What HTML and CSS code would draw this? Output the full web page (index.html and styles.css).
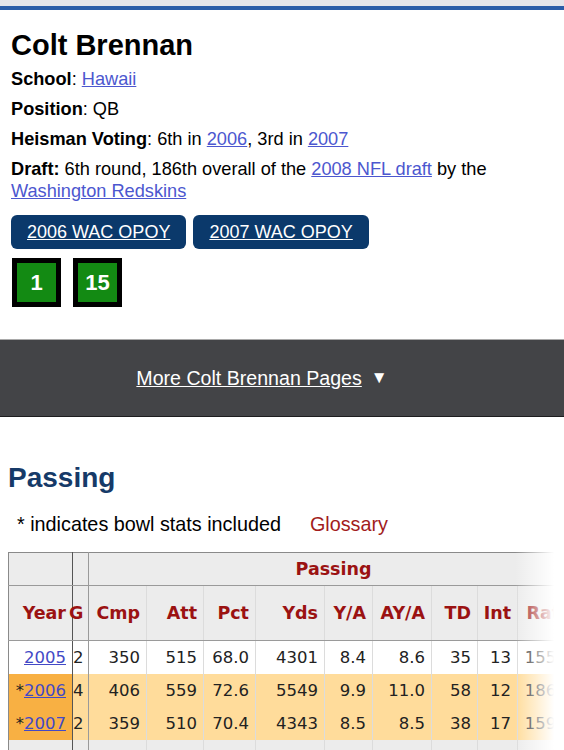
FILE: index.html
```html
<!DOCTYPE html>
<html lang="en">
<head>
<meta charset="utf-8">
<title>Colt Brennan College Stats</title>
<link rel="stylesheet" href="styles.css">
</head>
<body>
<div class="topband"></div>
<div class="bio">
  <h1>Colt Brennan</h1>
  <p><strong>School</strong>: <a href="#">Hawaii</a></p>
  <p><strong>Position</strong>: QB</p>
  <p><strong>Heisman Voting</strong>: 6th in <a href="#">2006</a>, 3rd in <a href="#">2007</a></p>
  <p><strong>Draft:</strong> 6th round, 186th overall of the <a href="#">2008 NFL draft</a> by the <a href="#">Washington Redskins</a></p>
  <ul class="awards">
    <li><a href="#">2006 WAC OPOY</a></li>
    <li><a href="#">2007 WAC OPOY</a></li>
  </ul>
  <div class="badges">
    <span class="badge">1</span>
    <span class="badge">15</span>
  </div>
</div>
<div class="morebar"><a href="#">More Colt Brennan Pages</a><span class="arrow">▼</span></div>
<section class="stats">
  <h2>Passing</h2>
  <div class="note"><span>* indicates bowl stats included</span><a class="gloss" href="#">Glossary</a></div>
  <div class="tablewrap">
    <table>
      <colgroup>
        <col class="c-year"><col class="c-g"><col class="c-cmp"><col class="c-att"><col class="c-pct"><col class="c-yds"><col class="c-ya"><col class="c-aya"><col class="c-td"><col class="c-int"><col class="c-rate">
      </colgroup>
      <thead>
        <tr class="over">
          <th class="year"></th>
          <th class="g"></th>
          <th class="span" colspan="9">Passing</th>
        </tr>
        <tr class="head">
          <th class="year">Year</th>
          <th class="g">G</th>
          <th>Cmp</th>
          <th>Att</th>
          <th>Pct</th>
          <th>Yds</th>
          <th>Y/A</th>
          <th>AY/A</th>
          <th>TD</th>
          <th>Int</th>
          <th>Rate</th>
        </tr>
      </thead>
      <tbody>
        <tr>
          <td class="year"><a href="#">2005</a></td>
          <td class="g">2</td>
          <td>350</td><td>515</td><td>68.0</td><td>4301</td><td>8.4</td><td>8.6</td><td>35</td><td>13</td><td>155.1</td>
        </tr>
        <tr class="bowl">
          <td class="year">*<a href="#">2006</a></td>
          <td class="g">4</td>
          <td>406</td><td>559</td><td>72.6</td><td>5549</td><td>9.9</td><td>11.0</td><td>58</td><td>12</td><td>186.0</td>
        </tr>
        <tr class="bowl">
          <td class="year">*<a href="#">2007</a></td>
          <td class="g">2</td>
          <td>359</td><td>510</td><td>70.4</td><td>4343</td><td>8.5</td><td>8.5</td><td>38</td><td>17</td><td>159.9</td>
        </tr>
        <tr class="career">
          <td class="year"></td>
          <td class="g"></td>
          <td></td><td></td><td></td><td></td><td></td><td></td><td></td><td></td><td></td>
        </tr>
      </tbody>
    </table>
  </div>
</section>
</body>
</html>
```
FILE: styles.css
```css
html, body {
  margin: 0;
  padding: 0;
  background: #ffffff;
}

body {
  font-family: "Liberation Sans", Arial, sans-serif;
  color: #000;
}

a {
  color: #4c57cf;
  text-decoration: underline;
}

.topband {
  height: 6px;
  background: #e4e4ea;
  border-bottom: 4px solid #2a5ca8;
}

.bio {
  padding: 0 11px;
}

.bio h1 {
  margin: 18px 0 6px;
  font-size: 29px;
  line-height: 34px;
  font-weight: bold;
}

.bio p {
  margin: 0 0 8px;
  font-size: 18.2px;
  line-height: 22px;
}

.awards {
  list-style: none;
  margin: 13px 0 0;
  padding: 0;
  display: flex;
  gap: 7px;
}

.awards a {
  display: block;
  background: #0b396b;
  color: #ffffff;
  border-radius: 6px;
  padding: 7px 16px;
  font-size: 18px;
  line-height: 20px;
}

.badges {
  display: flex;
  gap: 12px;
  margin-top: 9px;
  padding-left: 1px;
}

.badge {
  box-sizing: border-box;
  width: 49px;
  height: 49px;
  border: 5px solid #000;
  background: #138a13;
  color: #fff;
  font-weight: bold;
  font-size: 22px;
  display: flex;
  align-items: center;
  justify-content: center;
}

.morebar {
  margin-top: 32px;
  height: 76px;
  box-sizing: content-box;
  padding-right: 40px;
  background: #434447;
  border-top: 1px solid #a9a9a9;
  border-bottom: 1px solid #1d1d1f;
  display: flex;
  align-items: center;
  justify-content: center;
  font-size: 19.6px;
  color: #fff;
}

.morebar a {
  color: #ffffff;
}

.morebar .arrow {
  margin-left: 9px;
  font-size: 17px;
}

.stats h2 {
  margin: 45px 0 0;
  padding-left: 8px;
  font-size: 28px;
  line-height: 32px;
  color: #163a68;
}

.note {
  margin-top: 19px;
  padding-left: 17px;
  font-size: 19.8px;
  line-height: 22px;
}

.note .gloss {
  margin-left: 29px;
  color: #a21c1c;
  text-decoration: none;
}

.tablewrap {
  position: relative;
  margin: 17px 0 0 8px;
  overflow: hidden;
}

.tablewrap::after {
  content: "";
  position: absolute;
  top: 0;
  bottom: 0;
  right: 0;
  width: 49px;
  background: linear-gradient(to right, rgba(255,255,255,0), #ffffff 80%);
}

table {
  border-collapse: collapse;
  table-layout: fixed;
  width: 570px;
  font-family: "DejaVu Sans", Verdana, sans-serif;
  font-size: 16.5px;
  color: #222;
  border-top: 1px solid #8a8a8a;
  border-left: 1px solid #8a8a8a;
}

.c-year { width: 64px; }
.c-g { width: 16px; }
.c-cmp { width: 58px; }
.c-att { width: 57px; }
.c-pct { width: 52px; }
.c-yds { width: 69px; }
.c-ya { width: 48px; }
.c-aya { width: 59px; }
.c-td { width: 46px; }
.c-int { width: 40px; }
.c-rate { width: 61px; }

th, td {
  padding: 0 6px 0 2px;
  text-align: right;
  border-right: 1px solid #dcdcdc;
  white-space: nowrap;
  overflow: visible;
}

th {
  background: #ececec;
  color: #9b1212;
  font-weight: bold;
  font-size: 17.5px;
}

tr.over th {
  height: 32px;
  border-bottom: 1px solid #9a9a9a;
}

tr.over th.span {
  text-align: center;
  padding: 0;
}

tr.head th {
  height: 54px;
  border-bottom: 1px solid #9a9a9a;
}

th.year, td.year {
  border-right: 1px solid #555;
}

th.g, td.g {
  border-right: 1px solid #9a9a9a;
  padding: 0;
  text-align: left;
}

th.g {
  text-indent: -4px;
}

tbody td {
  height: 33px;
}

tbody td a {
  color: #4349c6;
}

tr.bowl td {
  background: #ffdc9b;
}

tr.bowl td.year {
  background: #f8b043;
}

tr.career td {
  background: #ececec;
}
```
